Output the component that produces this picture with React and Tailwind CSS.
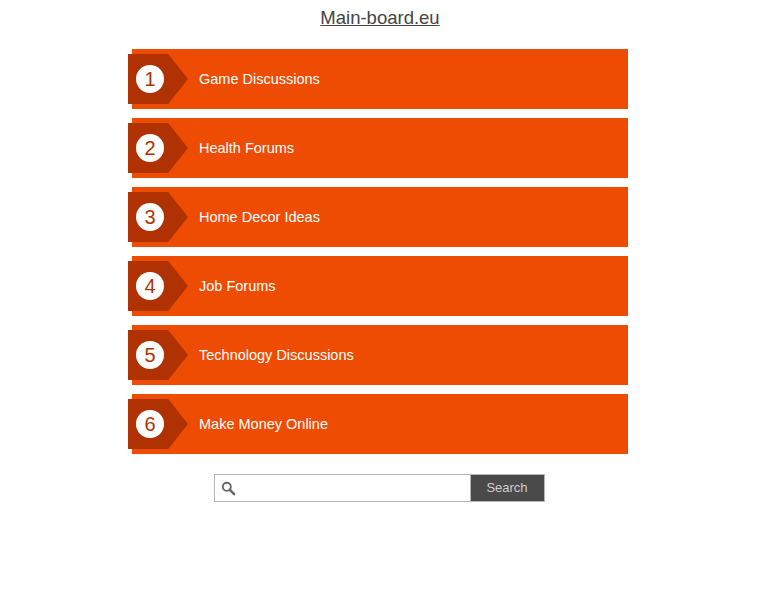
const items = [
  'Game Discussions',
  'Health Forums',
  'Home Decor Ideas',
  'Job Forums',
  'Technology Discussions',
  'Make Money Online',
];

function Badge({ n }) {
  return (
    <div className="-ml-[4px] flex h-[50px] w-[60px] shrink-0 items-center bg-[#b03202] pl-[8px] [clip-path:polygon(0_0,67%_0,100%_50%,67%_100%,0_100%)]">
      <div className="flex h-[28px] w-[28px] items-center justify-center rounded-full bg-white text-[20px] leading-none text-[#b03202]">
        {n}
      </div>
    </div>
  );
}

export default function App() {
  return (
    <div className="min-h-[600px] bg-white font-['Liberation_Sans',Arial,sans-serif]">
      <div className="pt-[7px] text-center">
        <a href="#" className="text-[18.5px] leading-[22px] text-[#444] underline">
          Main-board.eu
        </a>
      </div>

      <div className="mx-auto mt-[18px] flex w-[496px] flex-col gap-[9px]">
        {items.map((label, i) => (
          <div key={label} className="flex h-[60px] items-center bg-[#ee4c02]">
            <Badge n={i + 1} />
            <span className="ml-[11px] pt-[2px] text-[14.5px] text-white">{label}</span>
          </div>
        ))}
      </div>

      <div className="mx-auto mt-[20px] flex h-[28px] w-[331px] -translate-x-[1px]">
        <div className="flex flex-1 items-center border border-[#b5b5b5] bg-white pl-[6px]">
          <svg width="15" height="15" viewBox="0 0 16 16" fill="none">
            <circle cx="6.2" cy="6.2" r="4.3" stroke="#666" strokeWidth="2" />
            <path d="M9.5 9.5 L14 14" stroke="#666" strokeWidth="2.6" strokeLinecap="round" />
          </svg>
        </div>
        <button className="w-[74px] border border-[#b5b5b5] border-l-0 bg-[#4a4a4a] text-[13px] text-[#cfcfcf]">
          Search
        </button>
      </div>
    </div>
  );
}
